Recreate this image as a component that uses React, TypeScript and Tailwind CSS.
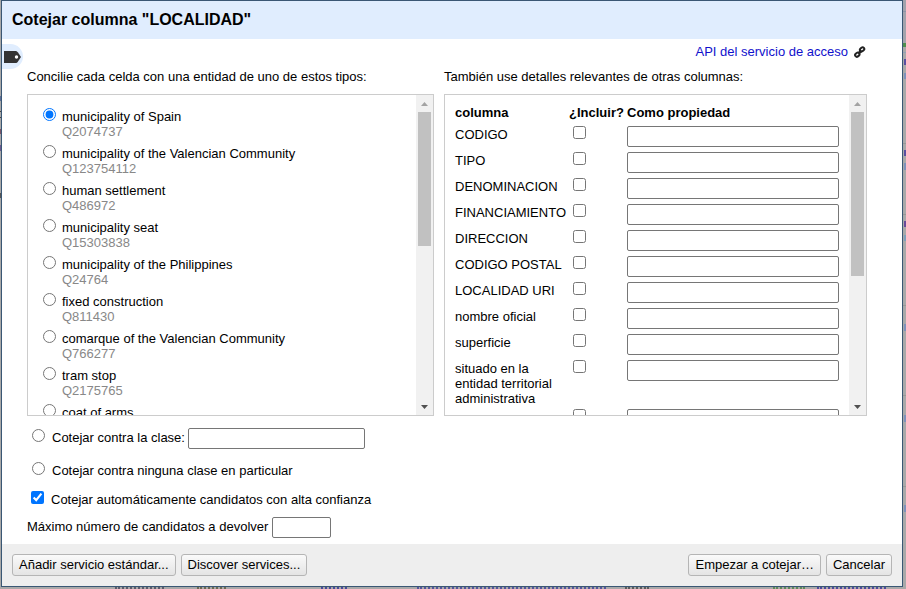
import { useState, type ReactNode } from "react";

const TYPES = [
  ["municipality of Spain", "Q2074737"],
  ["municipality of the Valencian Community", "Q123754112"],
  ["human settlement", "Q486972"],
  ["municipality seat", "Q15303838"],
  ["municipality of the Philippines", "Q24764"],
  ["fixed construction", "Q811430"],
  ["comarque of the Valencian Community", "Q766277"],
  ["tram stop", "Q2175765"],
  ["coat of arms", ""],
];

const COLUMNS = [
  "CODIGO",
  "TIPO",
  "DENOMINACION",
  "FINANCIAMIENTO",
  "DIRECCION",
  "CODIGO POSTAL",
  "LOCALIDAD URI",
  "nombre oficial",
  "superficie",
  "situado en la entidad territorial administrativa",
  "",
];

// Slivers of the dimmed data grid that stay visible round the dialog.
const SLIVERS = [
  "right-0 top-0 w-[3px] h-[43px] bg-[#a3a3ac]",
  "right-0 top-[11px] w-[3px] h-px bg-[#8e93a8]",
  "right-0 top-[43px] w-[3px] h-1 bg-[#4f8f4f]",
  "right-0 top-[52px] w-[3px] h-px bg-[#93a0b5]",
  "right-0 top-[59px] w-[2px] h-[6px] bg-[#5a50a0]",
  "right-0 top-[73px] w-[2px] h-[6px] bg-[#7f92bb]",
  "right-0 top-[143px] w-[3px] h-px bg-[#989898]",
  "right-0 top-[150px] w-[2px] h-[6px] bg-[#5a50a0]",
  "right-0 top-[163px] w-[2px] h-[7px] bg-[#7f92bb]",
  "right-0 top-[214px] w-[3px] h-px bg-[#989898]",
  "right-0 top-[221px] w-[2px] h-[6px] bg-[#6a4a9a]",
  "right-0 top-[235px] w-[2px] h-[6px] bg-[#7fa0bb]",
  "right-0 top-[305px] w-[3px] h-px bg-[#989898]",
  "right-0 top-[324px] w-[2px] h-[7px] bg-[#7f92bb]",
  "right-0 top-[395px] w-[3px] h-px bg-[#989898]",
  "right-0 top-[415px] w-[2px] h-[7px] bg-[#7f92bb]",
  "right-0 top-[486px] w-[3px] h-px bg-[#989898]",
  "right-0 top-[505px] w-[2px] h-[7px] bg-[#7f92bb]",
  "left-0 top-[96px] w-px h-[5px] bg-[#5d6f96]",
  "left-0 top-[111px] w-px h-px bg-[#444]",
  "left-0 top-[117px] w-px h-px bg-[#444]",
  "left-0 top-[129px] w-px h-[5px] bg-[#7a5568]",
  "left-0 top-[145px] w-px h-[6px] bg-[#6a5a90]",
  "left-0 top-[193px] w-px h-[5px] bg-[#555]",
  "left-[115px] bottom-0 w-[49px] border-t-2 border-dotted border-[#5c5c6c]",
  "left-[197px] bottom-0 w-[29px] border-t-2 border-dotted border-[#6c6a52]",
  "left-[321px] bottom-0 w-[26px] border-t-2 border-dotted border-[#4a4a9a]",
  "left-[417px] bottom-0 w-[189px] border-t-2 border-dotted border-[#55559c]",
  "left-[625px] bottom-0 w-6 border-t-2 border-dotted border-[#5c5c5c]",
  "left-[773px] bottom-0 w-8 border-t-2 border-dotted border-[#5f8a5a]",
  "left-[817px] bottom-0 w-[69px] border-t-2 border-dotted border-[#4f4a9c]",
];

const TEXT_BOX = "h-[21px] rounded-[2px] border border-[#767676] bg-white px-1";
const BUTTON =
  "h-[22px] rounded-[3px] border border-[#b5b5b5] bg-linear-to-b from-[#fafafa] to-[#e4e4e4] px-1.5 leading-5";

function ScrollPane({ thumb, children }: { thumb: string; children: ReactNode }) {
  return (
    <div className="flex h-[322px] border border-[#ccc]">
      <div className="min-w-0 flex-1 overflow-hidden px-2.5 py-2.5">{children}</div>
      <div className="flex w-[17px] shrink-0 flex-col items-center bg-[#f1f1f1]" aria-hidden="true">
        <svg className="h-[17px] w-[17px] shrink-0" viewBox="0 0 17 17">
          <path d="M5 11h7L8.500 7z" fill="#a3a3a3" />
        </svg>
        <div className={`w-[13px] bg-[#c1c1c1] ${thumb}`} />
        <svg className="mt-auto h-[17px] w-[17px] shrink-0" viewBox="0 0 17 17">
          <path d="M5 7h7L8.500 11z" fill="#505050" />
        </svg>
      </div>
    </div>
  );
}

export default function App() {
  const [choice, setChoice] = useState("Q2074737");
  const [auto, setAuto] = useState(true);
  return (
    <div className="relative flex min-h-screen flex-col bg-[#a9a9a9] pr-[3px] pb-0.5 pl-px font-['Liberation_Sans',Arial,sans-serif] text-[13px] leading-[15px] text-black">
      <div className="absolute inset-0 overflow-hidden" aria-hidden="true">
        {SLIVERS.map((sliver) => (
          <span key={sliver} className={`absolute ${sliver}`} />
        ))}
      </div>
      <main className="relative flex flex-1 flex-col border border-[#3a5774] bg-white">
        <h1 className="bg-[#e0edfe] px-2.5 py-2 text-base leading-[22px] font-bold">Cotejar columna "LOCALIDAD"</h1>

        <div className="flex items-start justify-between">
          <button className="mt-[5px] flex h-[25px] w-[21px] items-center rounded-r-full bg-[#e0edfe] pl-0.5" aria-label="Servicio">
            <svg className="h-3 w-[17px] shrink-0" viewBox="0 0 17 12">
              <path d="M0 0h12q1 0 2 1.500L17 6l-3 4.500Q13 12 12 12H0z" fill="#333" />
              <circle cx="12.500" cy="6" r="1.700" fill="#fff" />
            </svg>
          </button>
          <div className="mt-[5px] mr-9 flex items-center gap-1.5">
            <a href="#api" className="text-[#11c]">
              API del servicio de acceso
            </a>
            <svg className="h-3 w-3" viewBox="0 0 12 12" fill="none" stroke="#222" strokeWidth="2">
              <rect x="1" y="7" width="4.600" height="3.400" rx="1.700" transform="rotate(-40 3.300 8.700)" />
              <rect x="5.800" y="1.700" width="4.600" height="3.400" rx="1.700" transform="rotate(-40 8.100 3.400)" />
              <path d="M4.500 7.500l3-3" strokeWidth="2.500" />
            </svg>
          </div>
        </div>

        <div className="flex flex-1 flex-col pr-[35px] pl-[25px]">
          <div className="grid grid-cols-[407fr_423fr] gap-x-2.5">
            <section>
              <h2 className="mb-2.5">Concilie cada celda con una entidad de uno de estos tipos:</h2>
              <ScrollPane thumb="h-[134px]">
                {TYPES.map(([name, id]) => (
                  <label key={name} className="flex gap-1.5 px-[5px] pb-[3px]">
                    <input
                      type="radio"
                      name="type"
                      className="mt-[3px] h-[13px] w-[13px] shrink-0"
                      checked={choice === id}
                      onChange={() => setChoice(id)}
                    />
                    <span className="pt-1">
                      <span className="block whitespace-nowrap">{name}</span>
                      <span className="block text-[#888]">{id}</span>
                    </span>
                  </label>
                ))}
              </ScrollPane>
            </section>
            <section>
              <h2 className="mb-2.5">También use detalles relevantes de otras columnas:</h2>
              <ScrollPane thumb="h-[164px]">
                <table className="w-full table-fixed">
                  <thead>
                    <tr className="text-left align-top whitespace-nowrap">
                      <th className="h-[18px] w-[114px] font-bold">columna</th>
                      <th className="w-[58px] font-bold">¿Incluir?</th>
                      <th className="font-bold">Como propiedad</th>
                    </tr>
                  </thead>
                  <tbody>
                    {COLUMNS.map((column, i) => (
                      <tr key={i} className="align-top">
                        <td className="h-[26px] pt-1 pr-0.5">{column}</td>
                        <td className="pt-[3px] pl-1">
                          <input type="checkbox" className="block h-[13px] w-[13px]" aria-label={`Incluir ${column}`} />
                        </td>
                        <td className="pt-[3px]">
                          <input className={`block w-[212px] ${TEXT_BOX}`} aria-label={`Propiedad ${column}`} />
                        </td>
                      </tr>
                    ))}
                  </tbody>
                </table>
              </ScrollPane>
            </section>
          </div>

          <div className="mt-3 flex items-start pl-[5px]">
            <input
              id="by-class"
              type="radio"
              name="type"
              className="mt-px mr-[7px] h-[13px] w-[13px]"
              checked={choice === "class"}
              onChange={() => setChoice("class")}
            />
            <label htmlFor="by-class" className="mr-[3px] pt-0.5">
              Cotejar contra la clase:
            </label>
            <input className={`w-[177px] ${TEXT_BOX}`} aria-label="Clase" />
          </div>
          <label className="mt-3 flex items-start gap-[7px] pl-[5px]">
            <input
              type="radio"
              name="type"
              className="mt-px h-[13px] w-[13px]"
              checked={choice === "none"}
              onChange={() => setChoice("none")}
            />
            <span className="pt-0.5">Cotejar contra ninguna clase en particular</span>
          </label>
          <label className="mt-3 flex items-start gap-[7px] pl-1">
            <input
              type="checkbox"
              className="mt-px h-[13px] w-[13px]"
              checked={auto}
              onChange={() => setAuto(!auto)}
            />
            <span className="pt-0.5">Cotejar automáticamente candidatos con alta confianza</span>
          </label>
          <div className="mt-2.5 mb-1.5 flex items-start gap-1">
            <label htmlFor="max" className="pt-0.5">
              Máximo número de candidatos a devolver
            </label>
            <input id="max" className={`w-[59px] ${TEXT_BOX}`} />
          </div>
        </div>

        <footer className="flex justify-between bg-[#eee] p-2.5">
          <div className="flex gap-[5px]">
            <button className={BUTTON}>Añadir servicio estándar...</button>
            <button className={BUTTON}>Discover services...</button>
          </div>
          <div className="flex gap-[5px]">
            <button className={BUTTON}>Empezar a cotejar…</button>
            <button className={BUTTON}>Cancelar</button>
          </div>
        </footer>
      </main>
    </div>
  );
}
